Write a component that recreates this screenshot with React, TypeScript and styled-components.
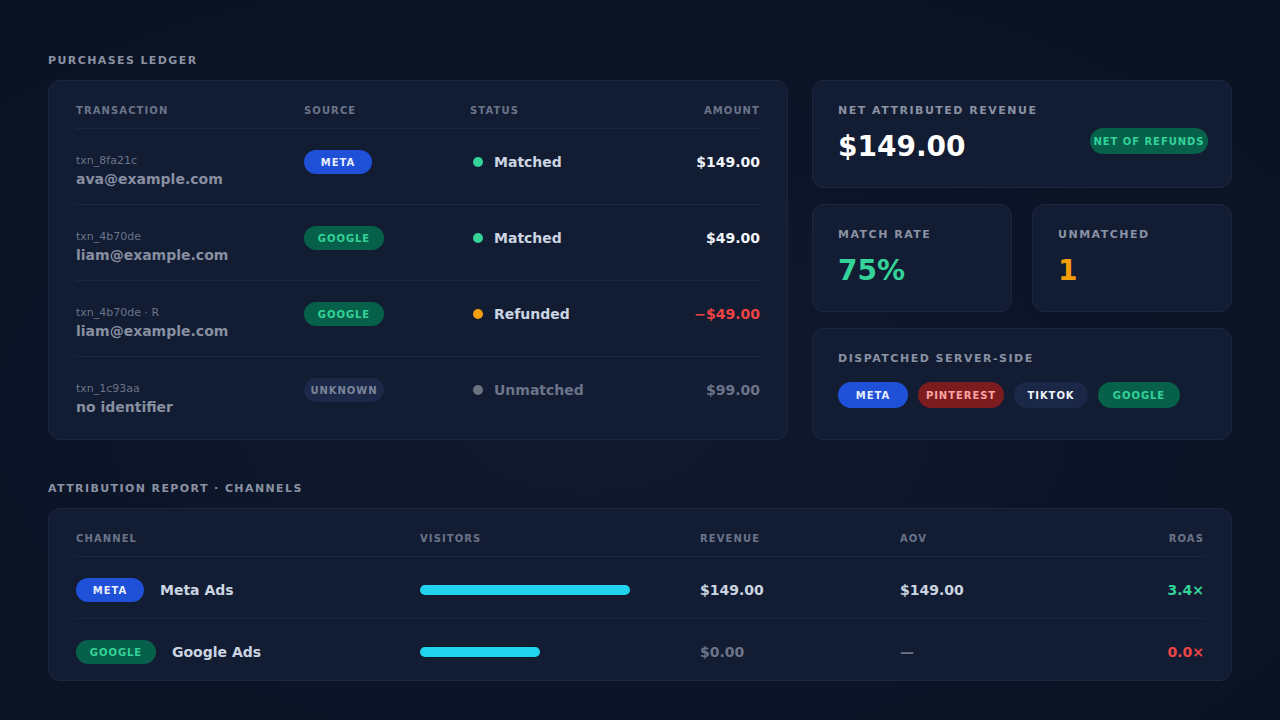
import React from "react";
import styled, { createGlobalStyle } from "styled-components";

const GlobalStyle = createGlobalStyle`
  * { box-sizing: border-box; }
  html, body { margin: 0; padding: 0; }
  body {
    width: 1280px;
    min-height: 720px;
    font-family: "DejaVu Sans", "Liberation Sans", sans-serif;
    background: radial-gradient(ellipse 70% 70% at 46% 58%, #101a2f 0%, #0c1528 55%, #0a1222 100%);
    color: #e2e8f0;
  }
`;

const Page = styled.main`
  width: 1280px;
  height: 720px;
  padding: 54px 48px 0;
`;

const SectionTitle = styled.h2<{ $top?: number }>`
  margin: ${(p) => p.$top ?? 0}px 0 12px;
  font-size: 11px;
  line-height: 14px;
  font-weight: 700;
  letter-spacing: 1.4px;
  color: #8a92a3;
  text-transform: uppercase;
`;

const TopGrid = styled.div`
  display: grid;
  grid-template-columns: 740px 420px;
  gap: 24px;
`;

const Card = styled.section<{ $pad?: string }>`
  background: #121c33;
  border: 1px solid #1c2743;
  border-radius: 12px;
  padding: ${(p) => p.$pad ?? "23px 23px 24px 25px"};
`;

const LedgerGrid = styled.div`
  display: grid;
  grid-template-columns: 228px 166px 1fr auto;
`;

const HeadCell = styled.div<{ $right?: boolean }>`
  font-size: 10px;
  line-height: 14px;
  font-weight: 700;
  letter-spacing: 1.1px;
  color: #6b7489;
  text-transform: uppercase;
  text-align: ${(p) => (p.$right ? "right" : "left")};
  padding-bottom: 10px;
  border-bottom: 1px solid #1b2641;
`;

const Cell = styled.div<{ $right?: boolean; $last?: boolean; $pb?: number }>`
  padding-top: 21px;
  padding-bottom: ${(p) => p.$pb ?? 16}px;
  border-bottom: ${(p) => (p.$last ? "none" : "1px solid #1b2641")};
  text-align: ${(p) => (p.$right ? "right" : "left")};
  display: flex;
  flex-direction: column;
  align-items: ${(p) => (p.$right ? "flex-end" : "flex-start")};
`;

const TxnId = styled.div`
  margin-top: 3px;
  font-size: 11px;
  line-height: 16px;
  color: #6b7489;
`;

const TxnEmail = styled.div`
  font-size: 14px;
  line-height: 20px;
  font-weight: 700;
  color: #878fa1;
`;

const tones = {
  meta: { bg: "#1f50d8", fg: "#e8eeff" },
  google: { bg: "#06604a", fg: "#34d399" },
  unknown: { bg: "#1b2847", fg: "#7b859a" },
  pinterest: { bg: "#7c1c1f", fg: "#fca5a5" },
  tiktok: { bg: "#1a2747", fg: "#f1f5f9" },
};

type Tone = keyof typeof tones;

const Pill = styled.span<{ $tone: Tone; $w: number; $h?: number }>`
  display: inline-flex;
  align-items: center;
  justify-content: center;
  width: ${(p) => p.$w}px;
  height: ${(p) => p.$h ?? 24}px;
  border-radius: 999px;
  background: ${(p) => tones[p.$tone].bg};
  color: ${(p) => tones[p.$tone].fg};
  font-size: 10px;
  font-weight: 700;
  letter-spacing: 0.95px;
  text-transform: uppercase;
  flex-shrink: 0;
`;

const Status = styled.div<{ $muted?: boolean }>`
  display: flex;
  align-items: center;
  height: 24px;
  font-size: 14px;
  font-weight: 700;
  color: ${(p) => (p.$muted ? "#6b7489" : "#cbd5e1")};
`;

const Dot = styled.span<{ $color: string }>`
  width: 10px;
  height: 10px;
  border-radius: 50%;
  margin-left: 3px;
  margin-right: 11px;
  background: ${(p) => p.$color};
`;

const Amount = styled.div<{ $color: string }>`
  font-size: 14px;
  line-height: 24px;
  font-weight: 700;
  color: ${(p) => p.$color};
`;

const SideColumn = styled.div`
  display: flex;
  flex-direction: column;
  gap: 16px;
`;

const StatRow = styled.div`
  display: grid;
  grid-template-columns: 1fr 1fr;
  gap: 20px;
`;

const Label = styled.div`
  font-size: 11px;
  line-height: 14px;
  font-weight: 700;
  letter-spacing: 1.5px;
  color: #8a92a3;
  text-transform: uppercase;
`;

const ValueRow = styled.div`
  margin-top: 10px;
  display: flex;
  justify-content: space-between;
  align-items: flex-start;
`;

const BigValue = styled.div<{ $color: string }>`
  padding-top: 3px;
  font-size: 28px;
  line-height: 32px;
  font-weight: 700;
  color: ${(p) => p.$color};
`;

const DispatchCard = styled(Card)`
  flex: 1;
`;

const PillRow = styled.div`
  margin-top: 16px;
  display: flex;
  gap: 10px;
`;

const ChannelGrid = styled.div`
  display: grid;
  grid-template-columns: 344px 280px 200px 1fr auto;
`;

const ChannelCell = styled(Cell)`
  flex-direction: row;
  align-items: center;
  justify-content: ${(p) => (p.$right ? "flex-end" : "flex-start")};
  gap: 16px;
  min-height: 24px;
`;

const ChannelName = styled.span`
  font-size: 14px;
  line-height: 24px;
  font-weight: 700;
  color: #cbd5e1;
`;

const Bar = styled.div`
  height: 10px;
  border-radius: 5px;
  background: #22d3ee;
`;

const ledger = [
  { id: "txn_8fa21c", who: "ava@example.com", src: "meta" as Tone, w: 68, status: "Matched", dot: "#34d399", amt: "$149.00", amtColor: "#f1f5f9" },
  { id: "txn_4b70de", who: "liam@example.com", src: "google" as Tone, w: 80, status: "Matched", dot: "#34d399", amt: "$49.00", amtColor: "#f1f5f9" },
  { id: "txn_4b70de · R", who: "liam@example.com", src: "google" as Tone, w: 80, status: "Refunded", dot: "#f59e0b", amt: "−$49.00", amtColor: "#ef4444" },
  { id: "txn_1c93aa", who: "no identifier", src: "unknown" as Tone, w: 80, status: "Unmatched", dot: "#6b7280", amt: "$99.00", amtColor: "#6b7489", muted: true },
];

const channels = [
  { tone: "meta" as Tone, w: 68, name: "Meta Ads", bar: 210, rev: "$149.00", revColor: "#cbd5e1", aov: "$149.00", aovColor: "#cbd5e1", roas: "3.4×", roasColor: "#34d399" },
  { tone: "google" as Tone, w: 80, name: "Google Ads", bar: 120, rev: "$0.00", revColor: "#6b7489", aov: "—", aovColor: "#6b7489", roas: "0.0×", roasColor: "#ef4444" },
];

export default function App() {
  return (
    <>
      <GlobalStyle />
      <Page>
        <SectionTitle>Purchases Ledger</SectionTitle>
        <TopGrid>
          <Card $pad="23px 27px 7px 27px">
            <LedgerGrid>
              <HeadCell>Transaction</HeadCell>
              <HeadCell>Source</HeadCell>
              <HeadCell>Status</HeadCell>
              <HeadCell $right>Amount</HeadCell>
              {ledger.map((r, i) => {
                const last = i === ledger.length - 1;
                return (
                  <React.Fragment key={i}>
                    <Cell $last={last} $pb={15}>
                      <TxnId>{r.id}</TxnId>
                      <TxnEmail>{r.who}</TxnEmail>
                    </Cell>
                    <Cell $last={last}>
                      <Pill $tone={r.src} $w={r.w}>{r.src}</Pill>
                    </Cell>
                    <Cell $last={last}>
                      <Status $muted={r.muted}>
                        <Dot $color={r.dot} />
                        {r.status}
                      </Status>
                    </Cell>
                    <Cell $last={last} $right>
                      <Amount $color={r.amtColor}>{r.amt}</Amount>
                    </Cell>
                  </React.Fragment>
                );
              })}
            </LedgerGrid>
          </Card>
          <SideColumn>
            <Card>
              <Label>Net Attributed Revenue</Label>
              <ValueRow>
                <BigValue $color="#ffffff">$149.00</BigValue>
                <Pill $tone="google" $w={118} $h={26}>Net of Refunds</Pill>
              </ValueRow>
            </Card>
            <StatRow>
              <Card>
                <Label>Match Rate</Label>
                <ValueRow>
                  <BigValue $color="#34d399">75%</BigValue>
                </ValueRow>
              </Card>
              <Card>
                <Label>Unmatched</Label>
                <ValueRow>
                  <BigValue $color="#f59e0b">1</BigValue>
                </ValueRow>
              </Card>
            </StatRow>
            <DispatchCard $pad="23px 23px 31px 25px">
              <Label>Dispatched Server-Side</Label>
              <PillRow>
                <Pill $tone="meta" $w={70} $h={26}>Meta</Pill>
                <Pill $tone="pinterest" $w={86} $h={26}>Pinterest</Pill>
                <Pill $tone="tiktok" $w={74} $h={26}>TikTok</Pill>
                <Pill $tone="google" $w={82} $h={26}>Google</Pill>
              </PillRow>
            </DispatchCard>
          </SideColumn>
        </TopGrid>

        <SectionTitle $top={42}>Attribution Report · Channels</SectionTitle>
        <Card $pad="23px 27px 0 27px">
          <ChannelGrid>
            <HeadCell>Channel</HeadCell>
            <HeadCell>Visitors</HeadCell>
            <HeadCell>Revenue</HeadCell>
            <HeadCell>AOV</HeadCell>
            <HeadCell $right>ROAS</HeadCell>
            {channels.map((c, i) => {
              const last = i === channels.length - 1;
              return (
                <React.Fragment key={i}>
                  <ChannelCell $last={last}>
                    <Pill $tone={c.tone} $w={c.w}>{c.tone}</Pill>
                    <ChannelName>{c.name}</ChannelName>
                  </ChannelCell>
                  <ChannelCell $last={last}>
                    <Bar style={{ width: c.bar }} />
                  </ChannelCell>
                  <ChannelCell $last={last}>
                    <Amount $color={c.revColor}>{c.rev}</Amount>
                  </ChannelCell>
                  <ChannelCell $last={last}>
                    <Amount $color={c.aovColor}>{c.aov}</Amount>
                  </ChannelCell>
                  <ChannelCell $last={last} $right>
                    <Amount $color={c.roasColor}>{c.roas}</Amount>
                  </ChannelCell>
                </React.Fragment>
              );
            })}
          </ChannelGrid>
        </Card>
      </Page>
    </>
  );
}
